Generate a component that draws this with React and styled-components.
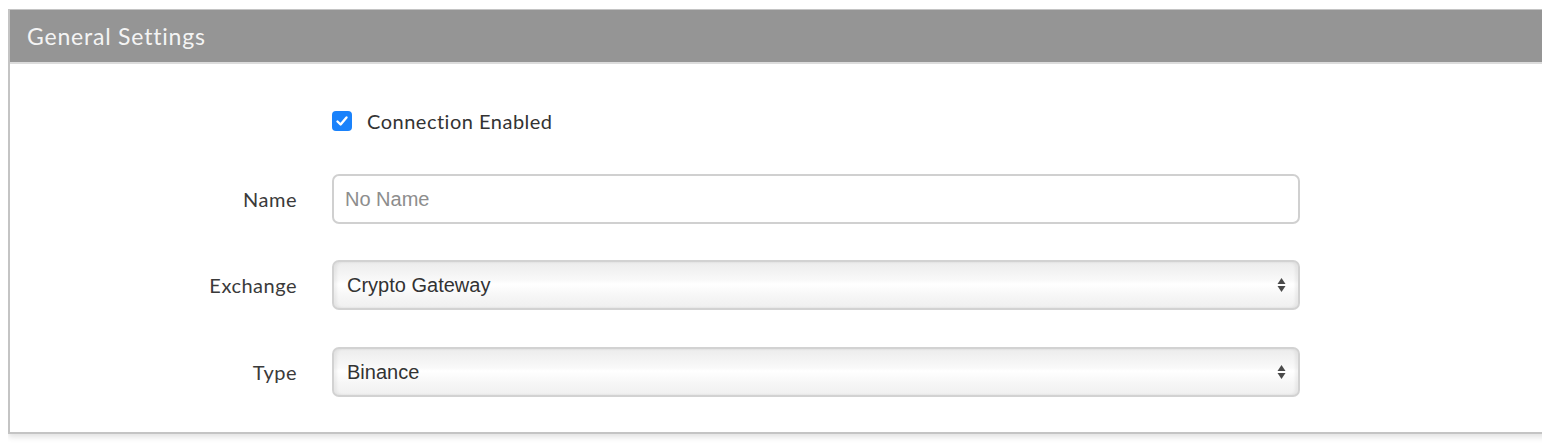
// Packages
import React, { useState } from "react"
import styled, { createGlobalStyle } from "styled-components"

// Styles
const GlobalStyle = createGlobalStyle`
    html,
    body {
        margin: 0;
        padding: 0;
        background: #ffffff;
        overflow: hidden;
    }

    body {
        padding: 9px 0 0 8px;
        font-family: Lato, "Open Sans", sans-serif;
    }
`

const Page = styled.div`
    overflow: hidden;
    padding-bottom: 12px;
`

const Panel = styled.section`
    width: calc(100% + 20px);
    border: 2px solid #c4c4c4;
    border-top-width: 1px;
    background: #ffffff;
    box-shadow: 0 3px 6px rgba(0, 0, 0, 0.12);
`

const PanelHeader = styled.header`
    height: 52px;
    padding: 0 17px;
    display: flex;
    align-items: center;
    background-color: #959595;
    border-bottom: 2px solid #dcdcdc;
    color: #f4f4f4;
    font-size: 23px;
    letter-spacing: 0.8px;
`

const Body = styled.div`
    padding: 47px 0 35px;
`

const FormRow = styled.div`
    display: grid;
    grid-template-columns: 287px 968px;
    column-gap: 35px;
    align-items: center;
    margin-top: ${(p) => p.$space || 0}px;
`

const Label = styled.label`
    justify-self: end;
    font-size: 20px;
    letter-spacing: 0.5px;
    color: #3a3a3a;
`

const Control = styled.div`
    grid-column: 2;
    display: flex;
    align-items: center;
    gap: 15px;
`

const Check = styled.button`
    width: 20px;
    height: 20px;
    padding: 0;
    border: none;
    border-radius: 4px;
    background-color: #1a82fb;
    display: flex;
    align-items: center;
    justify-content: center;
    cursor: pointer;
`

const CheckLabel = styled.span`
    font-size: 20px;
    line-height: 20px;
    letter-spacing: 0.5px;
    color: #333333;
`

const Field = styled.input`
    box-sizing: border-box;
    width: 968px;
    height: 50px;
    margin: 0;
    padding: 0 11px;
    border: 2px solid #d0d0d0;
    border-radius: 7px;
    font-family: "Liberation Sans", Arial, sans-serif;
    font-size: 20px;
    color: #555555;
    outline: none;

    &::placeholder {
        color: #8d8d8d;
    }
`

const SelectBox = styled.div`
    box-sizing: border-box;
    width: 968px;
    height: 50px;
    padding: 0 12px 0 13px;
    display: flex;
    align-items: center;
    justify-content: space-between;
    border: 2px solid #d2d2d2;
    border-radius: 7px;
    background: linear-gradient(
        to bottom,
        #ececec 0%,
        #f9f9f9 40%,
        #ffffff 48%,
        #f6f6f6 75%,
        #f0f0f0 100%
    );
    box-shadow: inset 3px 0 3px rgba(0, 0, 0, 0.05),
        inset -3px 0 3px rgba(0, 0, 0, 0.05);
    font-family: "Liberation Sans", Arial, sans-serif;
    font-size: 20px;
    color: #333333;
`

function Arrows() {
    return (
        <svg width="9" height="16" viewBox="0 0 9 16">
            <path d="M4.5 1 L8.5 7 L0.5 7 Z" fill="#4a4a4a" />
            <path d="M0.5 9 L8.5 9 L4.5 15 Z" fill="#4a4a4a" />
        </svg>
    )
}

function Select({ value }) {
    return (
        <SelectBox>
            <span>{value}</span>
            <Arrows />
        </SelectBox>
    )
}

function App() {
    const [enabled, setEnabled] = useState(true)

    return (
        <Page>
            <GlobalStyle />
            <Panel>
                <PanelHeader>General Settings</PanelHeader>

                <Body>
                    <FormRow>
                        <Control>
                            <Check onClick={() => setEnabled(!enabled)}>
                                {enabled && (
                                    <svg width="14" height="14" viewBox="0 0 14 14">
                                        <path
                                            d="M2.5 7.5 L5.6 10.5 L11.5 3.5"
                                            fill="none"
                                            stroke="#ffffff"
                                            strokeWidth="2.4"
                                            strokeLinecap="round"
                                            strokeLinejoin="round"
                                        />
                                    </svg>
                                )}
                            </Check>
                            <CheckLabel>Connection Enabled</CheckLabel>
                        </Control>
                    </FormRow>

                    <FormRow $space={43}>
                        <Label>Name</Label>
                        <Control>
                            <Field placeholder="No Name" />
                        </Control>
                    </FormRow>

                    <FormRow $space={36}>
                        <Label>Exchange</Label>
                        <Control>
                            <Select value="Crypto Gateway" />
                        </Control>
                    </FormRow>

                    <FormRow $space={37}>
                        <Label>Type</Label>
                        <Control>
                            <Select value="Binance" />
                        </Control>
                    </FormRow>
                </Body>
            </Panel>
        </Page>
    )
}

export default App
